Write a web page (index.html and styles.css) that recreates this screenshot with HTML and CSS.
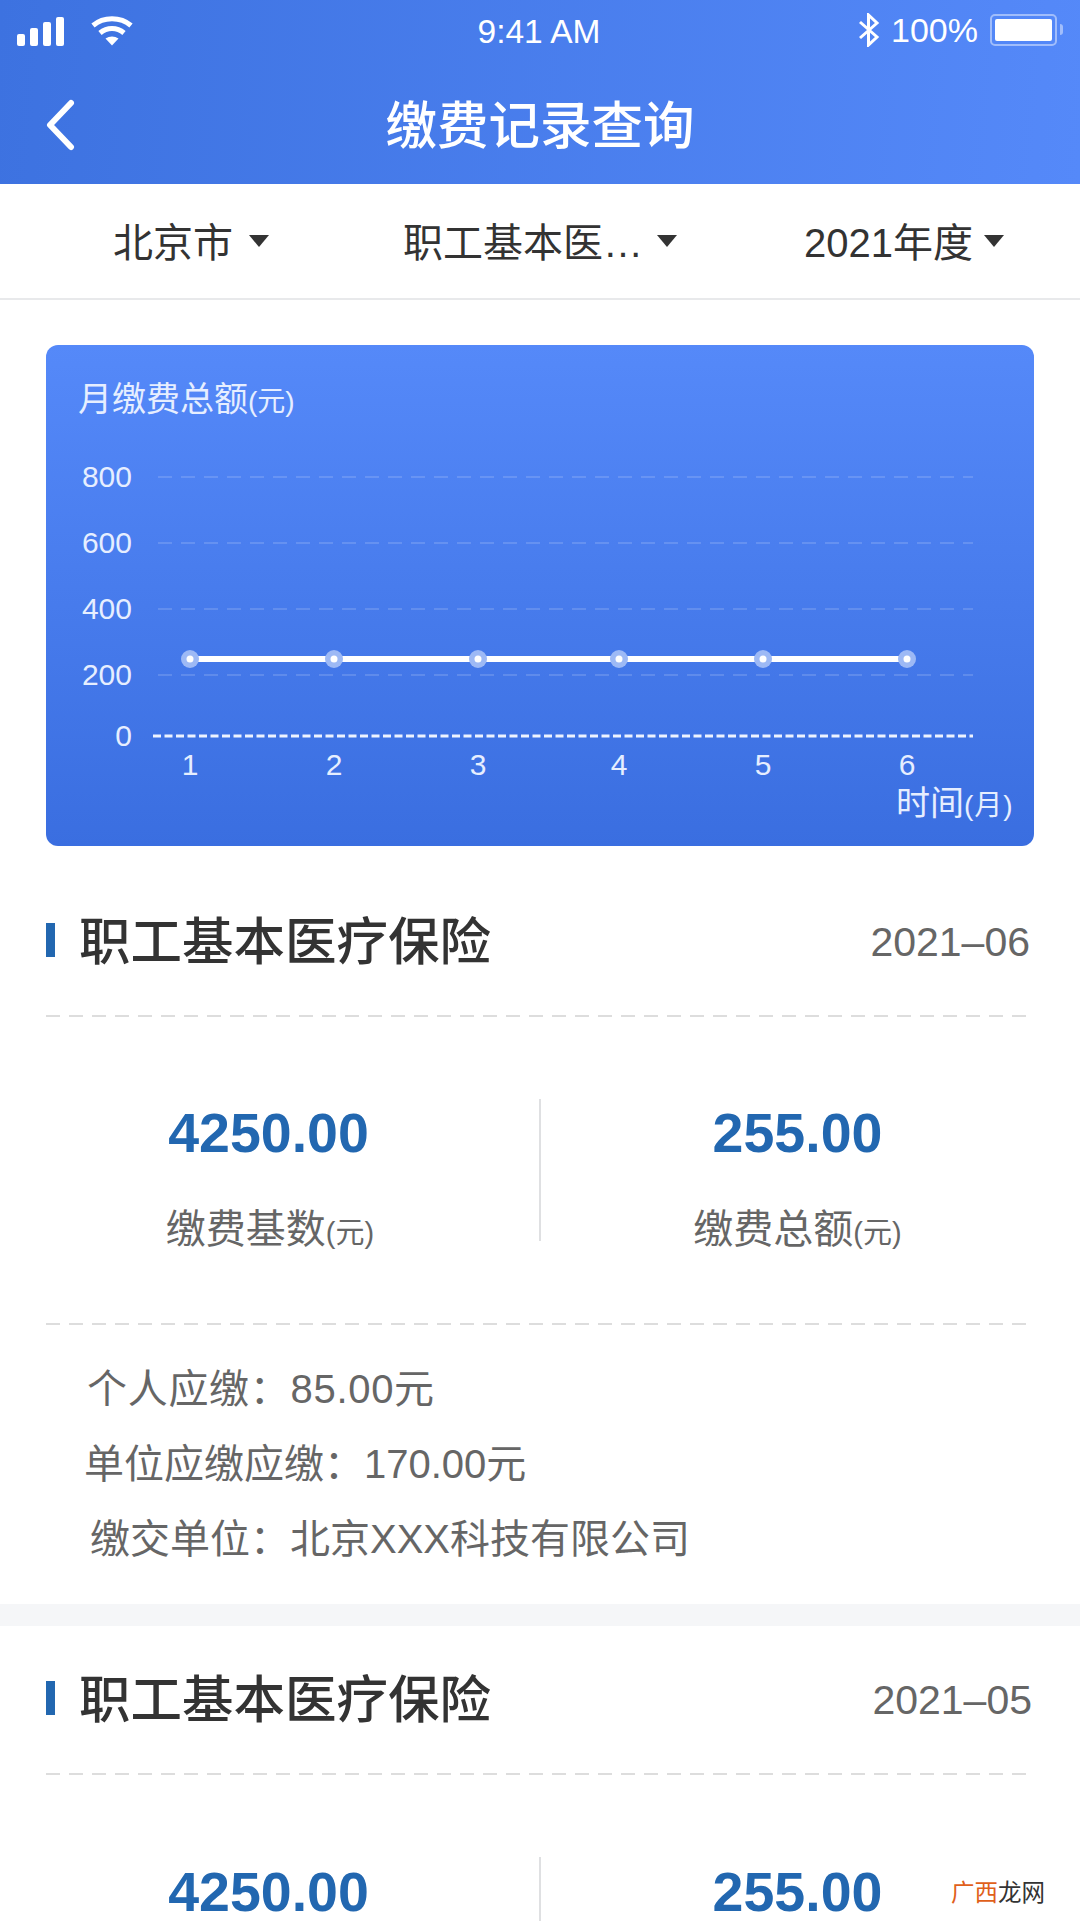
FILE: index.html
```html
<!DOCTYPE html>
<html lang="zh-CN">
<head>
    <meta charset="UTF-8">
    <title>缴费记录查询</title>
    <link rel="stylesheet" href="styles.css">
</head>
<body>

<header class="topbar">
    <div class="status">
        <div class="status-left">
            <svg class="signal" width="48" height="29" viewBox="0 0 48 29" fill="#fff">
                <rect x="0" y="17" width="8" height="12" rx="2"/>
                <rect x="13" y="11" width="8" height="18" rx="2"/>
                <rect x="26" y="5" width="8" height="24" rx="2"/>
                <rect x="39" y="0" width="8" height="29" rx="2"/>
            </svg>
            <svg class="wifi" width="44" height="30" viewBox="0 0 44 30" fill="none" stroke="#fff" stroke-width="5">
                <path d="M3 9.500C13.500 0.500 30.500 0.500 41 9.500"/>
                <path d="M10 17C17 11 27 11 34 17"/>
                <path d="M22 29.500L15.500 22.500C19.500 19.800 24.500 19.800 28.500 22.500Z" fill="#fff" stroke="none"/>
            </svg>
        </div>
        <div class="status-time">9:41 AM</div>
        <div class="status-right">
            <svg class="bluetooth" width="22" height="34" viewBox="0 0 22 34" fill="none" stroke="#fff" stroke-width="3">
                <path d="M2 9L19 24L10.500 32V2L19 10L2 25"/>
            </svg>
            <span class="battery-pct">100%</span>
            <div class="battery"><div class="battery-fill"></div></div>
        </div>
    </div>
    <div class="nav">
        <svg class="back" width="32" height="52" viewBox="0 0 32 52" fill="none" stroke="#fff" stroke-width="6" stroke-linecap="round" stroke-linejoin="round">
            <path d="M27 4L6 26L27 48"/>
        </svg>
        <h1>缴费记录查询</h1>
    </div>
</header>

<nav class="filters">
    <div class="filter filter-city">北京市<i class="caret"></i></div>
    <div class="filter filter-type">职工基本医…<i class="caret"></i></div>
    <div class="filter filter-year">2021年度<i class="caret"></i></div>
</nav>

<section class="chart">
    <svg width="988" height="501" viewBox="46 345 988 501">
        <g class="grid">
            <line x1="158" y1="477" x2="973" y2="477"/>
            <line x1="158" y1="543" x2="973" y2="543"/>
            <line x1="158" y1="609" x2="973" y2="609"/>
            <line x1="158" y1="675" x2="973" y2="675"/>
        </g>
        <line class="axis" x1="153" y1="736" x2="973" y2="736"/>

        <g class="tick tick-y">
            <text x="132" y="487">800</text>
            <text x="132" y="553">600</text>
            <text x="132" y="619">400</text>
            <text x="132" y="685">200</text>
            <text x="132" y="746">0</text>
        </g>
        <g class="tick tick-x">
            <text x="190" y="775">1</text>
            <text x="334" y="775">2</text>
            <text x="478" y="775">3</text>
            <text x="619" y="775">4</text>
            <text x="763" y="775">5</text>
            <text x="907" y="775">6</text>
        </g>

        <line class="series" x1="190" y1="659" x2="907" y2="659"/>
        <g class="dot">
            <circle cx="190" cy="659" r="9"/><circle class="dot-in" cx="190" cy="659" r="3.500"/>
            <circle cx="334" cy="659" r="9"/><circle class="dot-in" cx="334" cy="659" r="3.500"/>
            <circle cx="478" cy="659" r="9"/><circle class="dot-in" cx="478" cy="659" r="3.500"/>
            <circle cx="619" cy="659" r="9"/><circle class="dot-in" cx="619" cy="659" r="3.500"/>
            <circle cx="763" cy="659" r="9"/><circle class="dot-in" cx="763" cy="659" r="3.500"/>
            <circle cx="907" cy="659" r="9"/><circle class="dot-in" cx="907" cy="659" r="3.500"/>
        </g>

        <text class="chart-label" x="78" y="411">月缴费总额<tspan class="unit">(元)</tspan></text>
        <text class="chart-label" x="896" y="815">时间<tspan class="unit unit-wide">(月)</tspan></text>
    </svg>
</section>

<section class="record record-first">
    <div class="record-head">
        <h2>职工基本医疗保险</h2>
        <span class="record-date">2021–06</span>
    </div>
    <div class="dash"></div>
    <div class="stats">
        <div class="stat">
            <div class="stat-value">4250.00</div>
            <div class="stat-label">缴费基数<small>(元)</small></div>
        </div>
        <div class="stat-rule"></div>
        <div class="stat">
            <div class="stat-value">255.00</div>
            <div class="stat-label">缴费总额<small>(元)</small></div>
        </div>
    </div>
    <div class="dash"></div>
    <div class="details">
        <p class="detail-person">个人应缴：85.00元</p>
        <p class="detail-unit">单位应缴应缴：170.00元</p>
        <p class="detail-company">缴交单位：北京XXX科技有限公司</p>
    </div>
</section>

<section class="record record-last">
    <div class="record-head">
        <h2>职工基本医疗保险</h2>
        <span class="record-date">2021–05</span>
    </div>
    <div class="dash"></div>
    <div class="stats">
        <div class="stat">
            <div class="stat-value">4250.00</div>
        </div>
        <div class="stat-rule"></div>
        <div class="stat">
            <div class="stat-value">255.00</div>
        </div>
    </div>
</section>

<div class="watermark"><span>广西</span>龙网</div>

</body>
</html>
```

FILE: styles.css
```css
html, body {
    margin: 0;
    padding: 0;
}

body {
    position: relative;
    width: 1080px;
    height: 1921px;
    overflow: hidden;
    background-color: #fff;
    font-family: "Liberation Sans", "Noto Sans CJK SC", sans-serif;
    color: #333;
}

/* header */
.topbar {
    height: 184px;
    color: #fff;
    background: linear-gradient(95deg, #3d72e0, #5589f9);
}

.status {
    display: grid;
    grid-template-columns: 1fr auto 1fr;
    align-items: center;
    height: 60px;
    padding: 0 23px 0 17px;
}

.status-left {
    display: flex;
    align-items: center;
    gap: 25px;
    padding-top: 2px;
}

.status-time {
    margin-left: 4px;
    font-size: 33.500px;
    padding-top: 4px;
}

.status-right {
    display: flex;
    align-items: center;
    justify-content: flex-end;
    gap: 11px;
}

.battery-pct {
    font-size: 34px;
}

.battery {
    position: relative;
    box-sizing: border-box;
    width: 67px;
    height: 32px;
    margin-left: 1px;
    padding: 3px;
    border: 2px solid rgba(255, 255, 255, .45);
    border-radius: 5px;
}

.battery::after {
    content: "";
    position: absolute;
    right: -8px;
    top: 8px;
    width: 3px;
    height: 11px;
    border-radius: 0 3px 3px 0;
    background: rgba(255, 255, 255, .45);
}

.battery-fill {
    height: 100%;
    border-radius: 2px;
    background: #fff;
}

.nav {
    position: relative;
    height: 124px;
    display: flex;
    align-items: center;
    justify-content: center;
}

.back {
    position: absolute;
    left: 44px;
    top: 39px;
}

.nav h1 {
    margin: 0 0 1px;
    font-size: 51.500px;
    font-weight: 500;
}

/* filters */
.filters {
    display: flex;
    height: 114px;
    border-bottom: 2px solid #e8e9eb;
    font-size: 40px;
    color: #333;
}

.filter {
    display: flex;
    align-items: center;
    padding-bottom: 2px;
}

.filter-city {
    margin-left: 113px;
}

.filter-type {
    margin-left: 134px;
}

.filter-year {
    margin-left: 127px;
}

.caret {
    width: 0;
    height: 0;
    margin-left: 16px;
    margin-top: 2px;
    border-left: 10px solid transparent;
    border-right: 10px solid transparent;
    border-top: 12px solid #333;
}

.filter-type .caret {
    margin-left: 14px;
}

.filter-year .caret {
    margin-left: 11px;
}

/* chart */
.chart {
    width: 988px;
    height: 501px;
    margin: 45px 0 22px 46px;
    border-radius: 12px;
    overflow: hidden;
    background: linear-gradient(180deg, #5589f9, #3a6ee0);
}

.chart svg {
    display: block;
}

.grid line {
    stroke: rgba(255, 255, 255, .15);
    stroke-width: 2;
    stroke-dasharray: 14 9;
}

.axis {
    stroke: #eef3ff;
    stroke-width: 3;
    stroke-dasharray: 8 3.500;
}

.series {
    stroke: #fff;
    stroke-width: 6;
}

.dot circle {
    fill: #9db9f5;
}

.dot .dot-in {
    fill: #fff;
}

.tick text, .chart-label {
    fill: #e6eeff;
    font-size: 30px;
}

.tick-y text {
    text-anchor: end;
}

.tick-x text {
    text-anchor: middle;
}

.chart-label {
    font-size: 34px;
}

.chart-label .unit {
    font-size: 28px;
}

.chart-label .unit-wide {
    letter-spacing: 1px;
}

/* records */
.record-first {
    border-bottom: 22px solid #f5f6f8;
}

.record-head {
    display: flex;
    align-items: center;
    justify-content: space-between;
    height: 147px;
    padding: 0 50px 0 46px;
}

.record-last .record-head {
    padding-right: 48px;
}

.record-head h2 {
    display: flex;
    align-items: center;
    margin: 0;
    padding-bottom: 9px;
    font-size: 51.500px;
    font-weight: 500;
    color: #333;
}

.record-head h2::before {
    content: "";
    width: 9px;
    height: 34px;
    margin: 5px 24px 0 0;
    background: #2267b0;
}

.record-date {
    margin-top: 2px;
    font-size: 41px;
    color: #666;
}

.dash {
    height: 2px;
    margin: 0 54px 0 46px;
    background: repeating-linear-gradient(90deg, #ddd 0 14px, transparent 14px 23px);
}

.stats {
    display: grid;
    grid-template-columns: 537px 4px 1fr;
    height: 306px;
    padding-right: 26px;
    box-sizing: border-box;
}

.record-last .stats {
    height: 147px;
    overflow: hidden;
}

.stat {
    padding-top: 86px;
    text-align: center;
}

.record-last .stat {
    padding-top: 87px;
}

.stat-rule {
    width: 2px;
    height: 142px;
    margin: 82px 0 0 2px;
    background: #dfe0e2;
}

.stat-value {
    font-size: 55.500px;
    line-height: 60px;
    font-weight: 700;
    color: #2267b0;
}

.stat-label {
    margin-top: 40px;
    font-size: 40px;
    line-height: 52px;
    color: #666;
}

.stat:first-child .stat-label {
    padding-left: 3px;
}

.stat-label small {
    font-size: 29px;
}

.details {
    padding: 27px 0;
    font-size: 40px;
    line-height: 75px;
    color: #666;
}

.details p {
    margin: 0;
}

.detail-person {
    padding-left: 87px;
    letter-spacing: .7px;
}

.detail-unit {
    padding-left: 84px;
}

.detail-company {
    padding-left: 90px;
}

.watermark {
    position: absolute;
    right: 35px;
    bottom: 14px;
    font-size: 23.500px;
    line-height: 28px;
    color: #333;
}

.watermark span {
    color: #e0601a;
}
```
